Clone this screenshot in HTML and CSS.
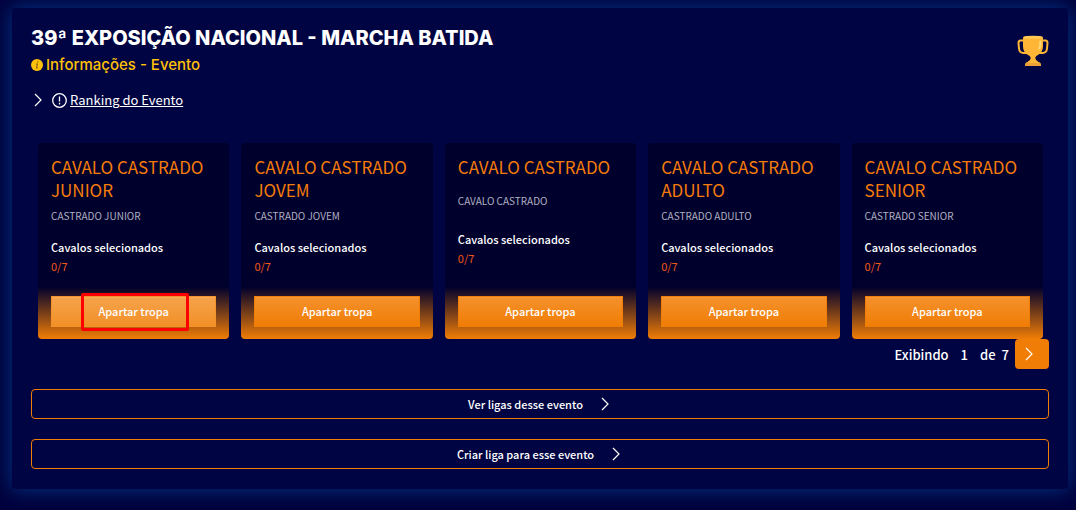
FILE: index.html
```html
<!DOCTYPE html>
<html lang="pt-BR">
<head>
<meta charset="utf-8">
<meta name="viewport" content="width=device-width, initial-scale=1">
<title>39ª Exposição Nacional</title>
<link rel="stylesheet" href="styles.css">
</head>
<body>
<main class="panel">
  <header class="header">
    <div>
      <h1 class="title">39ª EXPOSIÇÃO NACIONAL - MARCHA BATIDA</h1>
      <a class="info" href="#info">
        <svg class="info-icon" viewBox="0 0 12 12" aria-hidden="true"><circle cx="6" cy="6" r="6" fill="#ffc107"/><path d="M6.600 2.300v1.300M5 5h1.300l-.7 4h1.300" fill="none" stroke="#8a6410" stroke-width="1.200"/></svg>
        <span>Informações - Evento</span>
      </a>
    </div>
    <svg class="trophy" viewBox="0 0 32 32" aria-hidden="true">
      <path d="M7 5.500H3.500Q1.500 5.500 1.500 8l.5 5.500q.4 4.500 4.500 4.500H10M25 5.500h3.500q2 0 2 2.500l-.5 5.500q-.4 4.500-4.500 4.500H22" fill="none" stroke="#ffb636" stroke-width="2"/>
      <path d="M6 2.500h20v8c0 5-2 8-5.500 9.700-1.800 1-2.500 2.200-2 3.500l1.500 3.300h-8l1.500-3.300c.5-1.300-.2-2.500-2-3.500C8 18.500 6 15.500 6 10.500z" fill="#ffb636"/>
      <path d="M6 2.200Q7 .8 16 .8t10 1.400q0 1.600-10 1.600T6 2.200z" fill="#ffc954"/>
      <path d="M23.300 6.500v4l-1 3" fill="none" stroke="#ffd877" stroke-width="2" stroke-linecap="round"/>
      <path d="M8 31v-1.500q0-2.500 4-3h8q4 .5 4 3V31z" fill="#e9a038"/>
      <path d="M12 25.500h8l2 2.500H10z" fill="#ffb636"/>
    </svg>
  </header>

  <a class="ranking" href="#ranking">
    <svg class="chevron" viewBox="0 0 14 14" aria-hidden="true"><path d="M4 1l6 6-6 6"/></svg>
    <svg class="alert" viewBox="0 0 15 15" aria-hidden="true"><circle cx="7.500" cy="7.500" r="6.800"/><path d="M7.500 3.500v5M7.500 9.700v1.800"/></svg>
    <span class="ranking-text">Ranking do Evento</span>
  </a>

  <section class="cards">
    <article class="card">
      <div class="card-body">
        <h2 class="card-title">CAVALO CASTRADO JUNIOR</h2>
        <p class="card-sub">CASTRADO JUNIOR</p>
        <div class="card-stat"><p>Cavalos selecionados</p><p class="count">0/7</p></div>
      </div>
      <div class="card-foot"><button class="pick pick-active" type="button">Apartar tropa<span class="marker"></span></button></div>
    </article>
    <article class="card">
      <div class="card-body">
        <h2 class="card-title">CAVALO CASTRADO JOVEM</h2>
        <p class="card-sub">CASTRADO JOVEM</p>
        <div class="card-stat"><p>Cavalos selecionados</p><p class="count">0/7</p></div>
      </div>
      <div class="card-foot"><button class="pick" type="button">Apartar tropa</button></div>
    </article>
    <article class="card">
      <div class="card-body">
        <h2 class="card-title">CAVALO CASTRADO</h2>
        <p class="card-sub">CAVALO CASTRADO</p>
        <div class="card-stat"><p>Cavalos selecionados</p><p class="count">0/7</p></div>
      </div>
      <div class="card-foot"><button class="pick" type="button">Apartar tropa</button></div>
    </article>
    <article class="card">
      <div class="card-body">
        <h2 class="card-title">CAVALO CASTRADO ADULTO</h2>
        <p class="card-sub">CASTRADO ADULTO</p>
        <div class="card-stat"><p>Cavalos selecionados</p><p class="count">0/7</p></div>
      </div>
      <div class="card-foot"><button class="pick" type="button">Apartar tropa</button></div>
    </article>
    <article class="card">
      <div class="card-body">
        <h2 class="card-title">CAVALO CASTRADO SENIOR</h2>
        <p class="card-sub">CASTRADO SENIOR</p>
        <div class="card-stat"><p>Cavalos selecionados</p><p class="count">0/7</p></div>
      </div>
      <div class="card-foot"><button class="pick" type="button">Apartar tropa</button></div>
    </article>
  </section>

  <nav class="pager" aria-label="Paginação">
    <span>Exibindo</span>
    <span class="page">1</span>
    <span>de</span>
    <span class="total">7</span>
    <button class="next" type="button" aria-label="Próxima"><svg class="chevron" viewBox="0 0 14 14" aria-hidden="true"><path d="M4 1l6 6-6 6"/></svg></button>
  </nav>

  <div class="actions">
    <button class="action" type="button">Ver ligas desse evento <svg class="chevron" viewBox="0 0 14 14" aria-hidden="true"><path d="M4 1l6 6-6 6"/></svg></button>
    <button class="action" type="button">Criar liga para esse evento <svg class="chevron" viewBox="0 0 14 14" aria-hidden="true"><path d="M4 1l6 6-6 6"/></svg></button>
  </div>
</main>
</body>
</html>
```
FILE: styles.css
```css
* {
  box-sizing: border-box;
}

body {
  margin: 0;
  padding: 8px 8px 20px 12px;
  background: #00023c;
  color: #fff;
  font-family: "Noto Sans CJK JP", "Noto Sans", sans-serif;
  font-size: 11px;
  font-weight: 500;
}

h1, h2, p {
  margin: 0;
}

button {
  font: inherit;
  color: inherit;
  cursor: pointer;
}

.panel {
  padding: 18px 19px 20px;
  border-radius: 4px;
  background: #000442;
  box-shadow: 0 0 20px 1px #003080;
}

.header {
  display: flex;
  justify-content: space-between;
  align-items: flex-start;
}

.title {
  font: 800 20px/25px Inter, sans-serif;
}

.info {
  display: flex;
  align-items: center;
  gap: 3px;
  margin-top: 3px;
  color: #ffc107;
  font: 500 15px/22px Inter, sans-serif;
  text-decoration: none;
}

.info-icon {
  width: 12px;
  height: 12px;
}

.trophy {
  width: 32px;
  height: 32px;
  margin-top: 9px;
}

.ranking {
  display: flex;
  width: fit-content;
  align-items: center;
  margin-top: 14px;
  color: #fff;
  font-size: 13px;
  font-weight: 400;
  line-height: 20px;
  text-decoration: none;
}

.ranking-text {
  margin-left: 3px;
  text-decoration: underline;
}

.chevron {
  width: 14px;
  height: 14px;
  fill: none;
  stroke: #fff;
  stroke-width: 1.2;
}

.alert {
  width: 15px;
  height: 15px;
  margin-left: 7px;
  fill: none;
  stroke: #fff;
  stroke-width: 1.3;
}

.cards {
  display: grid;
  grid-template-columns: repeat(5, 1fr);
  gap: 12px;
  margin-top: 33px;
  padding: 0 6px 0 7px;
}

.card {
  display: flex;
  flex-direction: column;
  overflow: hidden;
  border-radius: 4px;
  background: #00002c;
}

.card-body {
  display: flex;
  flex: 1;
  flex-direction: column;
  justify-content: space-between;
  gap: 7px;
  padding: 12px 13px 4px;
}

.card-body::after {
  content: "";
}

.card-title {
  color: #f57c0a;
  font-size: 17px;
  font-weight: 400;
  line-height: 23px;
}

.card-sub {
  color: #b0b0c0;
  font-size: 10px;
  font-weight: 400;
  line-height: 16px;
}

.card-stat {
  padding-top: 7px;
  line-height: 19px;
}

.count {
  color: #f0591a;
  font-weight: 400;
}

.card-foot {
  padding: 9px 13px 12px;
  background: linear-gradient(#00002c, #f07d05);
}

.pick {
  position: relative;
  display: block;
  width: 100%;
  padding: 5px 0 6px;
  border: 1px solid #f07d05;
  background: linear-gradient(#f4912c, #f07d05);
  box-shadow: inset 0 1px 0 #f5993c;
  line-height: 18px;
}

.pick-active {
  border-color: #f4932c;
  background: linear-gradient(#f5a34c, #f29027);
  box-shadow: inset 0 1px 0 #f7a95c;
}

.marker {
  position: absolute;
  inset: -4px 26px -5px 29px;
  border: 3px solid #f00;
  border-radius: 2px;
}

.pager {
  display: flex;
  justify-content: flex-end;
  align-items: center;
  font-size: 13px;
}

.page {
  margin: 0 12px;
}

.total {
  margin: 0 6px;
}

.next {
  display: flex;
  width: 34px;
  height: 30px;
  align-items: center;
  padding: 0 7px;
  border: 0;
  border-radius: 4px;
  background: #f07d05;
}

.actions {
  display: grid;
  gap: 20px;
  margin-top: 20px;
}

.action {
  display: flex;
  justify-content: center;
  align-items: center;
  gap: 15px;
  padding: 5px 0;
  border: 1px solid #f07d05;
  border-radius: 4px;
  background: transparent;
  line-height: 18px;
}
```
